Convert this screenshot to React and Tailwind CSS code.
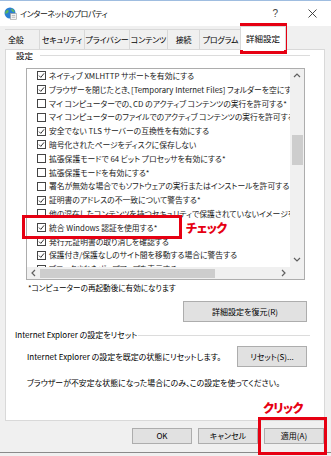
import React from 'react';

const rows = [
  [true, 'ネイティブ XMLHTTP サポートを有効にする'],
  [true, 'ブラウザーを閉じたとき、[Temporary Internet Files] フォルダーを空にする'],
  [false, 'マイ コンピューターでの、CD のアクティブ コンテンツの実行を許可する*'],
  [false, 'マイ コンピューターのファイルでのアクティブ コンテンツの実行を許可する*'],
  [true, '安全でない TLS サーバーの互換性を有効にする'],
  [true, '暗号化されたページをディスクに保存しない'],
  [false, '拡張保護モードで 64 ビット プロセッサを有効にする*'],
  [false, '拡張保護モードを有効にする*'],
  [false, '署名が無効な場合でもソフトウェアの実行またはインストールを許可する'],
  [true, '証明書のアドレスの不一致について警告する*'],
  [false, '他の混在したコンテンツを持つセキュリティで保護されていないイメージをブロックする'],
  [true, '統合 Windows 認証を使用する*'],
  [true, '発行元証明書の取り消しを確認する'],
  [true, '保護付き/保護なしのサイト間を移動する場合に警告する'],
  [false, 'ブロックされたポップアップを表示する'],
];

const tabs = [
  ['全般', 'w-[35px] justify-start pl-[3px]'],
  ['セキュリティ', 'w-[45px] justify-center'],
  ['プライバシー', 'w-[45px] justify-center'],
  ['コンテンツ', 'w-[38px] justify-center'],
  ['接続', 'w-[32px] justify-center'],
  ['プログラム', 'w-[42px] justify-center'],
];

function Checkbox({ checked }) {
  return (
    <span className="w-[9px] h-[9px] shrink-0 border border-[#444] bg-white flex items-center justify-center">
      {checked && (
        <svg width="7" height="7" viewBox="0 0 7 7">
          <polyline points="1,3.6 2.8,5.4 6,1.4" fill="none" stroke="#333" strokeWidth="1" />
        </svg>
      )}
    </span>
  );
}

function Chevron({ dir }) {
  const pts = {
    up: '1,5 4,2 7,5',
    down: '1,2 4,5 7,2',
    left: '5,1 2,4 5,7',
    right: '2,1 5,4 2,7',
  }[dir];
  return (
    <svg width="8" height="8" viewBox="0 0 8 8">
      <polyline points={pts} fill="none" stroke="#606060" strokeWidth="1.2" />
    </svg>
  );
}

function Button({ children, className = '' }) {
  return (
    <div className={`flex items-center justify-center whitespace-nowrap bg-[#e1e1e1] border border-[#adadad] text-[8px] text-black ${className}`}>
      {children}
    </div>
  );
}

export default function App() {
  return (
    <div className="relative w-[331px] h-[456px] overflow-hidden bg-[#f0f0f0] font-['Noto_Sans_CJK_JP','Noto_Sans',sans-serif] [font-feature-settings:'palt'] text-black">
      {/* Title bar */}
      <div className="h-[26px] bg-white border-t border-[#9fbde0] flex items-center">
        <svg className="ml-[4px]" width="13" height="13" viewBox="0 0 13 13">
          <circle cx="6" cy="6" r="5.5" fill="#2a7fd4" />
          <path d="M2.5 3.5 C4 2.5 5 3.5 4.5 5 C4 6.5 2.5 6 1.5 7 C1 5 1.5 4 2.5 3.5 Z" fill="#5cb85c" />
          <path d="M7 1.5 C9 2 10.5 3.5 10.5 5 C9.5 5.5 8 4.5 7.5 3.5 Z" fill="#5cb85c" />
          <rect x="6.5" y="6.5" width="6" height="6" fill="#f4f4f4" stroke="#9a9a9a" strokeWidth="0.6" />
          <line x1="7.8" y1="8.5" x2="11.2" y2="8.5" stroke="#9a9a9a" strokeWidth="0.6" />
          <line x1="7.8" y1="10.3" x2="11.2" y2="10.3" stroke="#9a9a9a" strokeWidth="0.6" />
        </svg>
        <span className="ml-[3px] text-[8px] tracking-[-0.4px] text-[#111] whitespace-nowrap">インターネットのプロパティ</span>
        <span className="ml-auto mr-[30px] text-[10px] text-[#444] font-['Liberation_Sans',sans-serif]">?</span>
        <svg className="mr-[14px]" width="9" height="9" viewBox="0 0 9 9">
          <line x1="0.5" y1="0.5" x2="8.5" y2="8.5" stroke="#333" strokeWidth="0.9" />
          <line x1="8.5" y1="0.5" x2="0.5" y2="8.5" stroke="#333" strokeWidth="0.9" />
        </svg>
      </div>

      {/* Tabs */}
      <div className="h-[23px] flex items-end pl-[5px]">
        {tabs.map(([label, cls]) => (
          <div key={label} className={`h-[20px] flex items-center whitespace-nowrap border-t border-r border-[#d9d9d9] bg-[#f0f0f0] text-[8px] tracking-[-0.2px] ${cls}`}>
            {label}
          </div>
        ))}
        <div className="relative z-10 -ml-[2px] -mb-[1px] h-[24px] w-[46px] flex items-center justify-center whitespace-nowrap bg-white border-t border-l border-r border-[#d9d9d9] text-[8.5px]">
          詳細設定
        </div>
      </div>

      {/* Panel */}
      <div className="ml-[5px] w-[320px] h-[372px] bg-white border border-[#d9d9d9] flex flex-col">
        <div className="h-[11px] flex items-center pl-[10px] pr-[14px]">
          <span className="text-[8.5px]">設定</span>
          <div className="flex-1 ml-[7px] h-px bg-[#dcdcdc]" />
        </div>

        {/* List box */}
        <div className="mt-[7px] ml-[20px] w-[279px] h-[212px] border border-[#adadad] grid grid-cols-[1fr_14px] grid-rows-[1fr_12px]">
          <div className="overflow-hidden pl-[10px]">
            {rows.map(([checked, text], i) => (
              <div key={i} className="h-[13.8px] flex items-center gap-[3px] whitespace-nowrap">
                <Checkbox checked={checked} />
                <span className="text-[7.8px] text-[#1a1a1a]">{text}</span>
              </div>
            ))}
          </div>
          <div className="bg-[#f0f0f0] flex flex-col items-center">
            <div className="h-[14px] flex items-center justify-center">
              <Chevron dir="up" />
            </div>
            <div className="mt-[52px] w-[11px] h-[30px] bg-[#cdcdcd]" />
            <div className="mt-auto h-[14px] flex items-center justify-center">
              <Chevron dir="down" />
            </div>
          </div>
          <div className="bg-[#f0f0f0] flex items-center">
            <div className="w-[13px] flex justify-center">
              <Chevron dir="left" />
            </div>
            <div className="w-[175px] h-[9px] bg-[#cdcdcd]" />
            <div className="ml-auto w-[12px] flex justify-center">
              <Chevron dir="right" />
            </div>
          </div>
          <div className="bg-[#f0f0f0]" />
        </div>

        <div className="mt-[3px] h-[10px] flex items-center pl-[22px] text-[7.6px] whitespace-nowrap">
          *コンピューターの再起動後に有効になります
        </div>

        <Button className="mt-[8px] self-end mr-[17px] w-[124px] h-[21px]">詳細設定を復元(R)</Button>

        <div className="mt-[8px] h-[10px] flex items-center pl-[9px] pr-[14px] whitespace-nowrap">
          <span className="text-[8px]">Internet Explorer の設定をリセット</span>
          <div className="flex-1 ml-px h-px bg-[#dcdcdc]" />
        </div>

        <div className="mt-[6px] h-[21px] flex items-center pl-[21px] pr-[17px] whitespace-nowrap">
          <span className="text-[8px]">Internet Explorer の設定を既定の状態にリセットします。</span>
          <Button className="ml-auto w-[70px] h-[21px]">リセット(S)...</Button>
        </div>

        <div className="mt-[11px] h-[10px] flex items-center pl-[21px] text-[7.9px] whitespace-nowrap">
          ブラウザーが不安定な状態になった場合にのみ、この設定を使ってください。
        </div>
      </div>

      {/* Bottom buttons */}
      <div className="mt-[7px] flex justify-end gap-[6px] pr-[7px]">
        <Button className="w-[60px] h-[16px] border-[#0078d7]">OK</Button>
        <Button className="w-[60px] h-[16px]">キャンセル</Button>
        <Button className="w-[60px] h-[16px]">適用(A)</Button>
      </div>
      <div className="mt-[8px] h-px bg-[#8a8a8a]" />

      {/* Annotations */}
      <div className="absolute left-[240px] top-[23px] w-[47px] h-[31px] border-[3px] border-[#e60012]" />
      <div className="absolute left-[22px] top-[215px] w-[160px] h-[24px] border-[3px] border-[#e60012]" />
      <div className="absolute left-[186px] top-[220px] text-[12px] leading-[16px] font-black text-[#e60012] tracking-[-0.5px]">チェック</div>
      <div className="absolute left-[263px] top-[400px] text-[12px] leading-[16px] font-black text-[#e60012] tracking-[-0.5px]">クリック</div>
      <div className="absolute left-[258px] top-[417px] w-[69px] h-[38px] border-[3px] border-[#e60012]" />
    </div>
  );
}
